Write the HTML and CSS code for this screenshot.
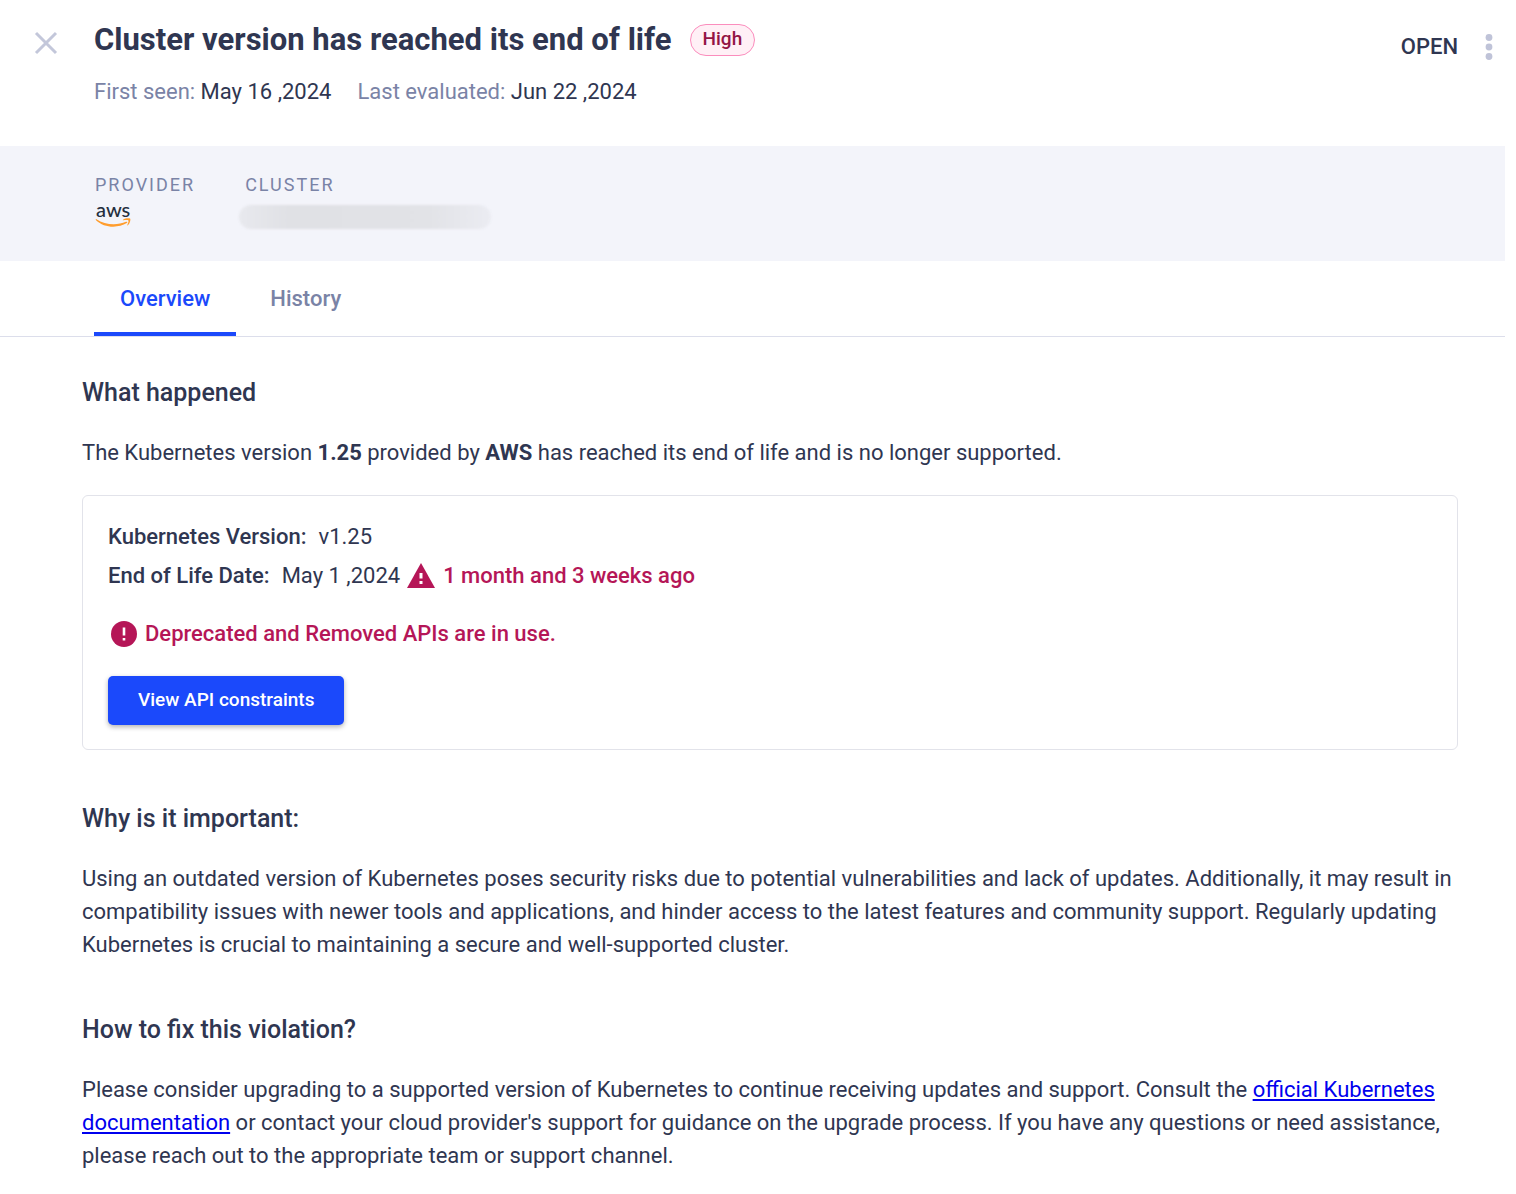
FILE: index.html
```html
<!DOCTYPE html>
<html lang="en">
<head>
  <meta charset="UTF-8">
  <meta name="viewport" content="width=device-width, initial-scale=1">
  <title>Cluster version has reached its end of life</title>
  <link rel="stylesheet" href="styles.css">
</head>
<body>

<div class="panel">
  <header class="header">
    <button class="icon-btn close" aria-label="Close">
      <svg width="24" height="24" viewBox="0 0 24 24"><path d="M2 2l20 20M22 2L2 22" fill="none" stroke="#c3c7da" stroke-width="3"/></svg>
    </button>
    <div class="heading">
      <div class="title-row">
        <h1>Cluster version has reached its end of life</h1>
        <span class="badge">High</span>
      </div>
      <div class="dates">
        <span>First seen: <b>May 16 ,2024</b></span>
        <span>Last evaluated: <b>Jun 22 ,2024</b></span>
      </div>
    </div>
    <div class="actions">
      <span class="status">OPEN</span>
      <button class="icon-btn more" aria-label="More actions">
        <svg width="8" height="26" viewBox="0 0 8 26" fill="#bfc3d8"><circle cx="4" cy="3.500" r="3.400"/><circle cx="4" cy="13" r="3.400"/><circle cx="4" cy="22.500" r="3.400"/></svg>
      </button>
    </div>
  </header>

  <section class="summary">
    <div class="summary-item">
      <span class="caption">Provider</span>
      <div class="aws">
        <span class="aws-name">aws</span>
        <svg width="36" height="10" viewBox="0 0 36 10">
          <path d="M1.500 1.200C10 7 22 7.500 31 3.800c1.200-.4 1.800.6.8 1.300C23 10.500 9 10 1 2.200c-.6-.7-.2-1.400.5-1z" fill="#ff9d2e"/>
          <path d="M28 1.700c2-1.500 6.600-1.700 7.200-.9s-.3 4.800-2.300 6.500c-.4.3-.8.200-.6-.3.600-1.300 1.600-3.900 1.100-4.500s-3.200-.4-5-.2c-.6 0-.7-.3-.4-.6z" fill="#ff9d2e"/>
        </svg>
      </div>
    </div>
    <div class="summary-item">
      <span class="caption">Cluster</span>
      <span class="redacted"></span>
    </div>
  </section>

  <nav class="tabs" role="tablist">
    <button class="tab active" role="tab" aria-selected="true">Overview</button>
    <button class="tab" role="tab" aria-selected="false">History</button>
  </nav>

  <main class="content">
    <section class="block">
      <h2>What happened</h2>
      <p>The Kubernetes version <strong>1.25</strong> provided by <strong>AWS</strong> has reached its end of life and is no longer supported.</p>

      <div class="card">
        <dl class="facts">
          <div class="fact">
            <dt>Kubernetes Version:</dt>
            <dd>v1.25</dd>
          </div>
          <div class="fact">
            <dt>End of Life Date:</dt>
            <dd>May 1 ,2024</dd>
            <dd class="alert">
              <svg width="28" height="25" viewBox="0 0 28 25"><path d="M14 0l14 25H0z" fill="#b51657"/><path d="M12.500 10h3v5.500h-3zM12.500 18h3v3h-3z" fill="#fff"/></svg>
              1 month and 3 weeks ago
            </dd>
          </div>
        </dl>
        <div class="alert usage">
          <svg width="26" height="26" viewBox="0 0 26 26"><circle cx="13" cy="13" r="13" fill="#b51657"/><path d="M11.700 6.500h2.600v8h-2.600zM11.700 17h2.600v2.600h-2.600z" fill="#fff"/></svg>
          Deprecated and Removed APIs are in use.
        </div>
        <button class="primary-btn">View API constraints</button>
      </div>
    </section>

    <section class="block">
      <h2>Why is it important:</h2>
      <p>Using an outdated version of Kubernetes poses security risks due to potential vulnerabilities and lack of updates. Additionally, it may result in compatibility issues with newer tools and applications, and hinder access to the latest features and community support. Regularly updating Kubernetes is crucial to maintaining a secure and well-supported cluster.</p>
    </section>

    <section class="block">
      <h2>How to fix this violation?</h2>
      <p>Please consider upgrading to a supported version of Kubernetes to continue receiving updates and support. Consult the <a href="#">official Kubernetes documentation</a> or contact your cloud provider's support for guidance on the upgrade process. If you have any questions or need assistance, please reach out to the appropriate team or support channel.</p>
    </section>
  </main>
</div>

</body>
</html>
```

FILE: styles.css
```css
:root {
  --text: #2f3651;
  --muted: #7a83a6;
  --primary: #1b49fb;
  --danger: #b51657;
  --band: #f3f4fa;
}
* { margin: 0; padding: 0; box-sizing: border-box; }
body {
  font-family: Roboto, sans-serif;
  font-size: 22px;
  line-height: 33px;
  color: var(--text);
  background: #fff;
}
button {
  font: inherit;
  border: none;
  background: none;
  cursor: pointer;
}
svg { display: block; flex: none; }
.panel {
  margin-right: 11px;
}
.header {
  display: flex;
  align-items: flex-start;
  min-height: 146px;
  padding: 20px 12px 0 34px;
}
.close {
  margin: 11px 36px 0 0;
}
.heading { flex: 1; }
.title-row {
  display: flex;
  align-items: center;
  gap: 18px;
}
h1 {
  font-size: 31px;
  line-height: 40px;
  font-weight: 700;
}
.badge {
  padding: 0 12px 2px;
  border: 1px solid #fb8dbd;
  border-radius: 16px;
  background: #fff0f6;
  color: #931545;
  font-size: 19px;
  line-height: 28px;
  font-weight: 500;
}
.dates {
  display: flex;
  gap: 26px;
  margin-top: 15px;
  color: var(--muted);
}
.dates b {
  font-weight: 400;
  color: var(--text);
}
.actions {
  display: flex;
  align-items: center;
  gap: 27px;
  margin-top: 10px;
}
.status { font-weight: 500; }
.summary {
  display: flex;
  gap: 50px;
  min-height: 115px;
  padding: 28px 95px 0;
  background: var(--band);
}
.summary-item {
  display: flex;
  flex-direction: column;
}
.caption {
  font-size: 18px;
  line-height: 22px;
  letter-spacing: 2px;
  text-transform: uppercase;
  color: var(--muted);
}
.aws {
  margin-top: 1px;
  color: #252f3e;
}
.aws-name {
  display: block;
  padding-left: 1px;
  font-family: Lato, sans-serif;
  font-size: 20px;
  font-weight: 500;
  line-height: 24px;
}
.aws svg { margin-top: -3px; }
.redacted {
  width: 252px;
  height: 24px;
  margin: 9px 0 0 -6px;
  border-radius: 12px;
  background: linear-gradient(90deg, #e8e9ee, #e0e1e5 20%, #e2e3e7 75%, #ebecf2);
  filter: blur(1px);
}
.tabs {
  display: flex;
  gap: 8px;
  padding-left: 94px;
  border-bottom: 1px solid #dcdeeb;
}
.tab {
  height: 75px;
  padding: 4px 26px 0;
  border-bottom: 4px solid transparent;
  font-weight: 500;
  color: var(--muted);
}
.tab.active {
  color: var(--primary);
  border-color: var(--primary);
}
.content {
  padding: 38px 47px 22px 82px;
}
.block + .block { margin-top: 51px; }
h2 {
  margin-bottom: 25px;
  font-size: 25px;
  line-height: 36px;
  font-weight: 500;
}
strong { font-weight: 700; }
a { color: #0000ee; }
.card {
  margin-top: 26px;
  padding: 24px 25px;
  border: 1px solid #e2e3ea;
  border-radius: 6px;
}
.facts {
  display: flex;
  flex-direction: column;
  gap: 6px;
}
.fact {
  display: flex;
}
dt {
  margin-right: 12px;
  font-weight: 500;
}
.alert {
  display: flex;
  align-items: center;
  gap: 8px;
  margin-left: 7px;
  font-weight: 500;
  color: var(--danger);
}
.usage { margin: 25px 0 26px 3px; }
.primary-btn {
  height: 49px;
  padding: 0 30px 2px;
  border-radius: 5px;
  background: var(--primary);
  color: #fff;
  font-size: 19px;
  font-weight: 500;
  box-shadow: 0 2px 5px rgba(0,0,0,0.3);
}
```
